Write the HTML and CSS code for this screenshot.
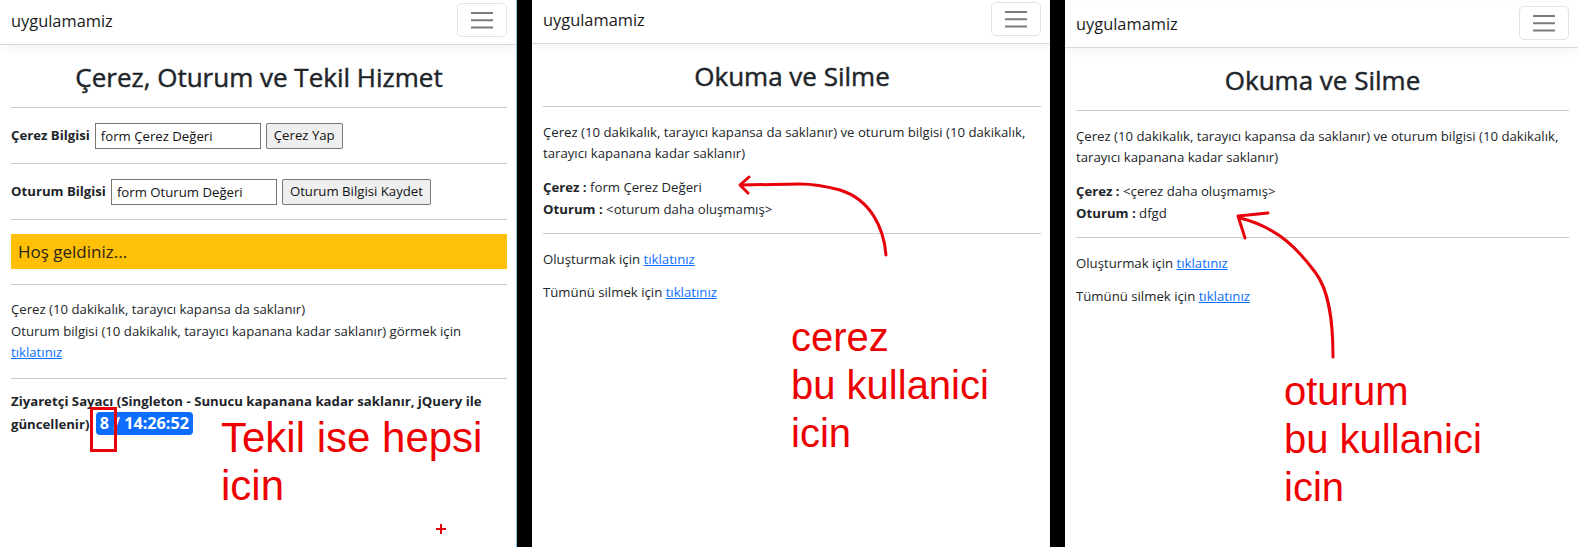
FILE: index.html
```html
<!DOCTYPE html>
<html lang="tr">
<head>
<meta charset="utf-8">
<title>uygulamamiz</title>
<link rel="stylesheet" href="styles.css">
</head>
<body>
<div class="stage">
  <section class="phone phone-a">
    <div class="sheet">
      <nav class="navbar">
        <span class="brand">uygulamamiz</span>
        <button class="toggler" type="button"><svg class="bars" width="22" height="22" viewBox="0 0 22 22"><path d="M0 4h22M0 11.3h22M0 18.6h22"/></svg></button>
      </nav>
      <main class="content">
        <h2 class="title">Çerez, Oturum ve Tekil Hizmet</h2>
        <hr>
        <form class="field-row">
          <label class="field-label">Çerez Bilgisi</label>
          <input class="field-input field-input-a" type="text" value="form Çerez Değeri">
          <button class="field-btn" type="button">Çerez Yap</button>
        </form>
        <hr>
        <form class="field-row">
          <label class="field-label">Oturum Bilgisi</label>
          <input class="field-input field-input-b" type="text" value="form Oturum Değeri">
          <button class="field-btn" type="button">Oturum Bilgisi Kaydet</button>
        </form>
        <hr>
        <div class="welcome">Hoş geldiniz...</div>
        <hr>
        <p class="text">Çerez (10 dakikalık, tarayıcı kapansa da saklanır)<br>Oturum bilgisi (10 dakikalık, tarayıcı kapanana kadar saklanır) görmek için<br><a href="#">tıklatınız</a></p>
        <hr>
        <p class="counter">Ziyaretçi Sayacı (Singleton - Sunucu kapanana kadar saklanır, jQuery ile<br>güncellenir) <span class="badge">8 / 14:26:52</span></p>
      </main>
    </div>
    <div class="mark-box"></div>
    <svg class="plus" width="10" height="10" viewBox="0 0 10 10"><path d="M5 0v10M0 5h10"/></svg>
    <div class="note note-a">Tekil ise hepsi<br>icin</div>
  </section>

  <section class="phone phone-b">
    <div class="sheet sheet-b">
      <nav class="navbar">
        <span class="brand">uygulamamiz</span>
        <button class="toggler" type="button"><svg class="bars" width="22" height="22" viewBox="0 0 22 22"><path d="M0 4h22M0 11.3h22M0 18.6h22"/></svg></button>
      </nav>
      <main class="content">
        <h2 class="title">Okuma ve Silme</h2>
        <hr>
        <p class="text">Çerez (10 dakikalık, tarayıcı kapansa da saklanır) ve oturum bilgisi (10 dakikalık,<br>tarayıcı kapanana kadar saklanır)</p>
        <p class="text"><b>Çerez :</b> form Çerez Değeri<br><b>Oturum :</b> &lt;oturum daha oluşmamış&gt;</p>
        <hr class="hr-tight">
        <p class="text">Oluşturmak için <a href="#">tıklatınız</a></p>
        <p class="text">Tümünü silmek için <a href="#">tıklatınız</a></p>
      </main>
    </div>
    <svg class="arrow" width="518" height="547" viewBox="0 0 518 547">
      <path d="M354 255 C352 230, 340 200, 308 190 C293 186, 283 184, 268 184 L209 185"/>
      <path d="M217 177 L208 185 L216 193"/>
    </svg>
    <div class="note note-b">cerez<br>bu kullanici<br>icin</div>
  </section>

  <section class="phone phone-c">
    <div class="sheet sheet-c">
      <nav class="navbar">
        <span class="brand">uygulamamiz</span>
        <button class="toggler" type="button"><svg class="bars" width="22" height="22" viewBox="0 0 22 22"><path d="M0 4h22M0 11.3h22M0 18.6h22"/></svg></button>
      </nav>
      <main class="content">
        <h2 class="title">Okuma ve Silme</h2>
        <hr>
        <p class="text">Çerez (10 dakikalık, tarayıcı kapansa da saklanır) ve oturum bilgisi (10 dakikalık,<br>tarayıcı kapanana kadar saklanır)</p>
        <p class="text"><b>Çerez :</b> &lt;çerez daha oluşmamış&gt;<br><b>Oturum :</b> dfgd</p>
        <hr class="hr-tight">
        <p class="text">Oluşturmak için <a href="#">tıklatınız</a></p>
        <p class="text">Tümünü silmek için <a href="#">tıklatınız</a></p>
      </main>
    </div>
    <svg class="arrow" width="513" height="547" viewBox="0 0 513 547">
      <path d="M268 357 C268 320, 264 290, 250 272 C235 252, 215 228, 175 218"/>
      <path d="M203 213 L173 216 L180 238"/>
    </svg>
    <div class="note note-c">oturum<br>bu kullanici<br>icin</div>
  </section>
</div>
</body>
</html>
```

FILE: styles.css
```css
* { box-sizing: border-box; }
html, body { margin: 0; padding: 0; }
body {
  width: 1578px;
  height: 547px;
  overflow: hidden;
  background: #000;
  font-family: "Open Sans", "Noto Sans", sans-serif;
  font-size: 13.2px;
  line-height: 21.6px;
  color: #212529;
}
.stage { display: flex; gap: 15px; height: 547px; }
.phone { position: relative; background: #fff; height: 547px; overflow: hidden; flex: none; }
.phone-a { width: 517px; border-right: 1px solid #7cc3e3; }
.phone-b { width: 518px; }
.phone-c { width: 513px; }
.sheet-b { margin-top: -1px; }
.sheet-c { margin-top: 3px; }

.navbar {
  height: 45px;
  border-bottom: 1px solid #dadada;
  box-shadow: 0 3px 10px rgba(0, 0, 0, .05);
  display: flex;
  justify-content: space-between;
  align-items: flex-start;
  padding: 0 9px 0 11px;
}
.brand { font-size: 16.4px; line-height: 24px; margin-top: 9px; color: #1b1b1b; }
.toggler {
  width: 50px; height: 34px; margin-top: 3px; padding: 0;
  border: 1px solid #e2e2e2; border-radius: 5px; background: #fff;
  display: flex; align-items: center; justify-content: center;
}
.bars path { stroke: #7b7b7b; stroke-width: 2; fill: none; }

.content { padding: 0 9px 0 11px; }
.title {
  margin: 16px 0 0; text-align: center; font-size: 26px; line-height: 32px;
  font-weight: 400; -webkit-text-stroke: 0.45px #212529;
}
hr { margin: 14.4px 0; border: 0; border-top: 1px solid #cacaca; }
.hr-tight { margin-top: 13px; }

.field-row { display: flex; align-items: center; gap: 5px; height: 26px; margin: 0; }
.field-label { font-weight: 700; }
.field-input {
  height: 26px; padding: 1px 5px; border: 1px solid #767676; border-radius: 0;
  font: inherit; color: #111; background: #fff;
}
.field-input-a, .field-input-b { width: 166px; }
.field-btn {
  height: 26px; padding: 0 7px; border: 1px solid #767676; border-radius: 2px;
  background: #efefef; font: inherit; color: #111;
}
.welcome { background: #ffc107; height: 35px; line-height: 35px; padding: 0 7px; font-size: 17px; color: #2a2417; }

.text { margin: 0 0 12px; }
.text a, .text a:visited { color: #0d6efd; }
.counter { margin: -4px 0 0; font-weight: 700; line-height: 22.6px; }
.badge {
  display: inline-block; background: #0d6efd; color: #fff; font-weight: 700;
  margin-left: 3px; padding: 0 4px; border-radius: 4px; line-height: 23px; font-size: 16.2px;
}

.mark-box {
  position: absolute; left: 90px; top: 407px; width: 27px; height: 45px;
  border: 3px solid #e8000b;
}
.plus { position: absolute; left: 436px; top: 524px; }
.plus path { stroke: #e8000b; stroke-width: 2; }

.arrow { position: absolute; left: 0; top: 0; pointer-events: none; }
.arrow path { stroke: #e8000b; stroke-width: 3; fill: none; stroke-linecap: round; stroke-linejoin: round; }

.note {
  position: absolute; color: #ee0000;
  font-family: "Liberation Sans", Arial, sans-serif; line-height: 48px;
}
.note-a { left: 221px; top: 414px; font-size: 42px; }
.note-b { left: 259px; top: 313px; font-size: 40px; }
.note-c { left: 219px; top: 367px; font-size: 40px; }
```
